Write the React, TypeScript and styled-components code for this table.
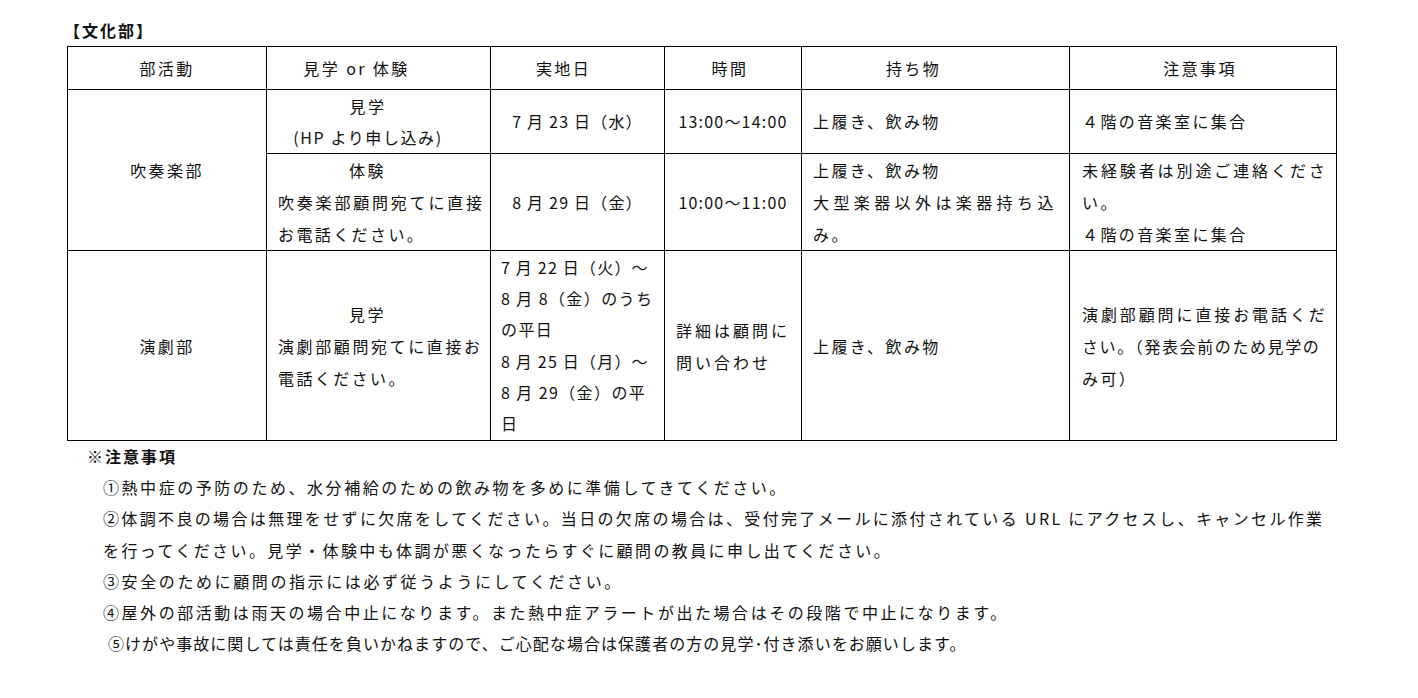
import styled, { createGlobalStyle } from 'styled-components';

const GlobalStyle = createGlobalStyle`
  body {
    margin: 0;
    background: #fff;
    color: #111;
    font-family: "Noto Sans CJK JP", "Noto Sans", sans-serif;
  }
`;

const Page = styled.div`
  padding: 17px 0 0 64px;
  font-size: 16px;
`;

const Title = styled.div`
  font-weight: 700;
  font-size: 16px;
  letter-spacing: 2px;
  line-height: 26px;
  height: 29px;
`;

const Table = styled.table`
  margin-left: 3px;
  border-collapse: collapse;
  table-layout: fixed;
  width: 1269px;
`;

const Col = styled.col<{ $w: number }>`
  width: ${(p) => p.$w}px;
`;

const Row = styled.tr<{ $h: number }>`
  height: ${(p) => p.$h}px;
`;

const Cell = styled.td<{ $align?: 'left' | 'center'; $pad?: string }>`
  border: 1px solid #000;
  padding: ${(p) => p.$pad ?? '0 11px'};
  text-align: ${(p) => p.$align ?? 'left'};
  vertical-align: middle;
  line-height: 32px;
  letter-spacing: 2.4px;
  white-space: nowrap;
  overflow: hidden;
`;

const Line = styled.div<{ $center?: boolean; $ls?: number; $lh?: number; $shift?: number }>`
  text-align: ${(p) => (p.$center ? 'center' : 'left')};
  letter-spacing: ${(p) => p.$ls ?? 2.4}px;
  line-height: ${(p) => p.$lh ?? 32}px;
  padding-right: ${(p) => p.$shift ?? 0}px;
`;

const Notes = styled.div`
  line-height: 31.2px;
  letter-spacing: 2.4px;
  white-space: nowrap;
`;

const NotesHeading = styled.div`
  font-weight: 700;
  letter-spacing: 2px;
  padding-left: 23px;
`;

const NoteLine = styled.div<{ $indent?: number; $ls?: number }>`
  padding-left: ${(p) => p.$indent ?? 39}px;
  letter-spacing: ${(p) => p.$ls ?? 2.4}px;
`;

// header label, right padding used to nudge the label off the column centre
const headers: [string, string][] = [
  ['部活動', '0'],
  ['見学 or 体験', '0 44px 0 0'],
  ['実地日', '0 28px 0 0'],
  ['時間', '0 6px 0 0'],
  ['持ち物', '0 44px 0 0'],
  ['注意事項', '0 6px 0 0'],
];
const widths = [199, 224, 174, 137, 268, 267];

export default function App() {
  return (
    <Page>
      <GlobalStyle />
      <Title>【文化部】</Title>
      <Table>
        <colgroup>
          {widths.map((w, i) => (
            <Col key={i} $w={w} />
          ))}
        </colgroup>
        <tbody>
          <Row $h={43}>
            {headers.map(([label, pad]) => (
              <Cell key={label} $align="center" $pad={pad}>
                {label}
              </Cell>
            ))}
          </Row>

          <Row $h={64}>
            <Cell rowSpan={2} $align="center" $pad="0">
              吹奏楽部
            </Cell>
            <Cell $align="center" $pad="0 21px 0 0">
              <Line $center $lh={31}>見学</Line>
              <Line $center $ls={1.6} $lh={31}>(HP より申し込み)</Line>
            </Cell>
            <Cell $align="center">
              <Line $center $ls={1.2} $lh={31}>7 月 23 日（水）</Line>
            </Cell>
            <Cell $align="center" $pad="0">
              <Line $center $ls={1.2} $lh={31}>13:00～14:00</Line>
            </Cell>
            <Cell>
              <Line $lh={31}>上履き、飲み物</Line>
            </Cell>
            <Cell $pad="0 12px">
              <Line $lh={31}>４階の音楽室に集合</Line>
            </Cell>
          </Row>

          <Row $h={96}>
            <Cell>
              <Line $center $shift={22}>体験</Line>
              <Line $ls={2.8}>吹奏楽部顧問宛てに直接</Line>
              <Line>お電話ください。</Line>
            </Cell>
            <Cell $align="center">
              <Line $center $ls={1.2}>8 月 29 日（金）</Line>
            </Cell>
            <Cell $align="center" $pad="0">
              <Line $center $ls={1.2}>10:00～11:00</Line>
            </Cell>
            <Cell>
              <Line>上履き、飲み物</Line>
              <Line $ls={4.4}>大型楽器以外は楽器持ち込</Line>
              <Line>み。</Line>
            </Cell>
            <Cell $pad="0 12px">
              <Line $ls={2.9}>未経験者は別途ご連絡くださ</Line>
              <Line>い。</Line>
              <Line>４階の音楽室に集合</Line>
            </Cell>
          </Row>

          <Row $h={190}>
            <Cell $align="center" $pad="0">
              演劇部
            </Cell>
            <Cell>
              <Line $center $shift={22}>見学</Line>
              <Line $ls={2.6}>演劇部顧問宛てに直接お</Line>
              <Line>電話ください。</Line>
            </Cell>
            <Cell $pad="0 8px 0 10px">
              <Line $ls={1.2} $lh={31.2}>7 月 22 日（火）～</Line>
              <Line $ls={1.4} $lh={31.2}>8 月 8（金）のうち</Line>
              <Line $ls={1.4} $lh={31.2}>の平日</Line>
              <Line $ls={1.2} $lh={31.2}>8 月 25 日（月）～</Line>
              <Line $ls={1.4} $lh={31.2}>8 月 29（金）の平</Line>
              <Line $ls={1.4} $lh={31.2}>日</Line>
            </Cell>
            <Cell>
              <Line $ls={3}>詳細は顧問に</Line>
              <Line $ls={3}>問い合わせ</Line>
            </Cell>
            <Cell>上履き、飲み物</Cell>
            <Cell $pad="0 12px">
              <Line $ls={2.9}>演劇部顧問に直接お電話くだ</Line>
              <Line $ls={1.6}>さい。（発表会前のため見学の</Line>
              <Line>み可）</Line>
            </Cell>
          </Row>
        </tbody>
      </Table>

      <Notes>
        <NotesHeading>※注意事項</NotesHeading>
        <NoteLine $ls={2.55}>①熱中症の予防のため、水分補給のための飲み物を多めに準備してきてください。</NoteLine>
        <NoteLine $ls={2.35}>
          ②体調不良の場合は無理をせずに欠席をしてください。当日の欠席の場合は、受付完了メールに添付されている URL にアクセスし、キャンセル作業
        </NoteLine>
        <NoteLine>を行ってください。見学・体験中も体調が悪くなったらすぐに顧問の教員に申し出てください。</NoteLine>
        <NoteLine $ls={2.6}>③安全のために顧問の指示には必ず従うようにしてください。</NoteLine>
        <NoteLine $ls={2.55}>④屋外の部活動は雨天の場合中止になります。また熱中症アラートが出た場合はその段階で中止になります。</NoteLine>
        <NoteLine $indent={44} $ls={1.05}>
          ⑤けがや事故に関しては責任を負いかねますので、ご心配な場合は保護者の方の見学･付き添いをお願いします。
        </NoteLine>
      </Notes>
    </Page>
  );
}
